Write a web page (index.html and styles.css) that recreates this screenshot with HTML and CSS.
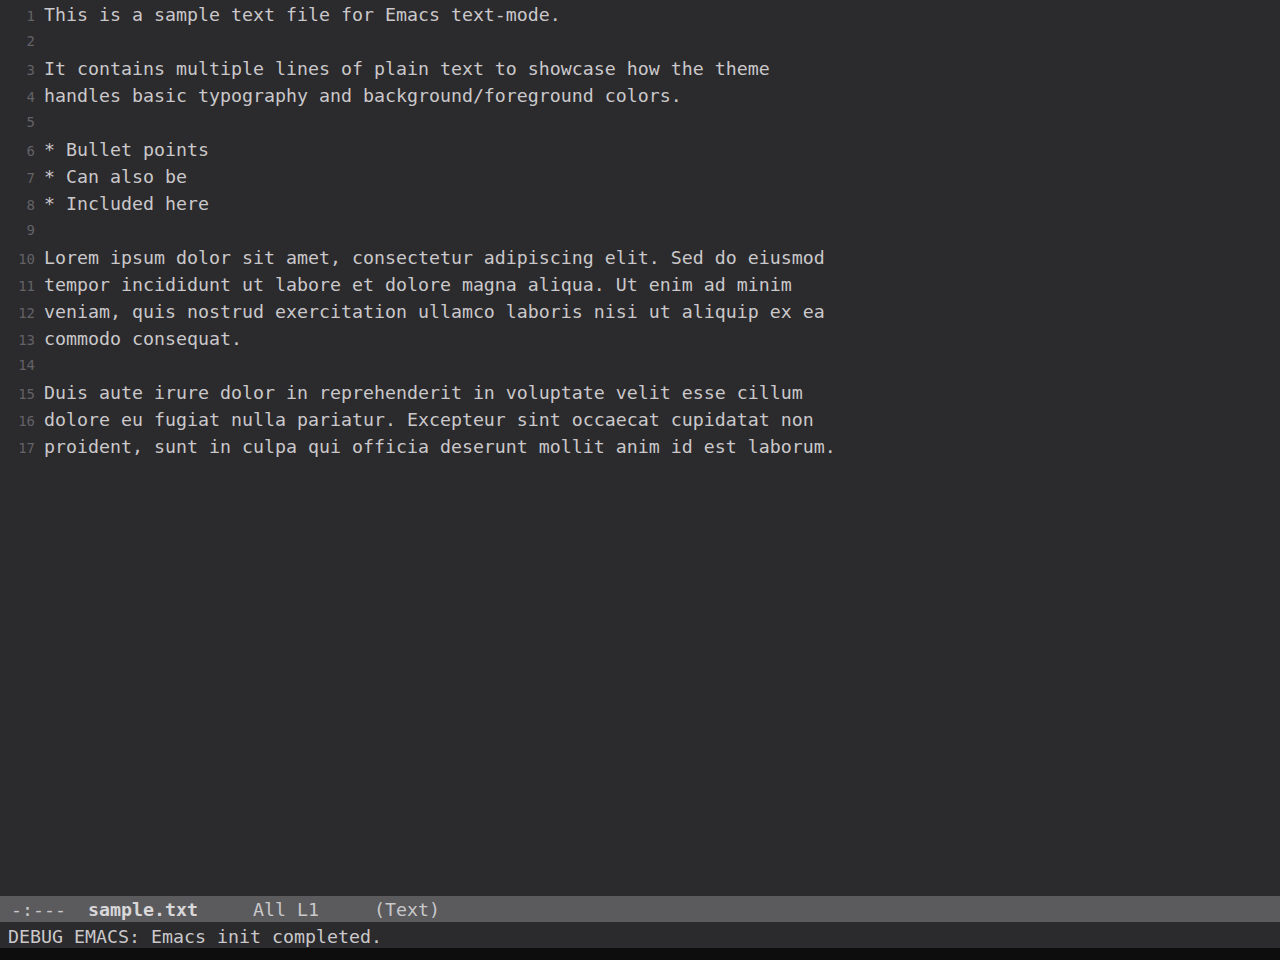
FILE: index.html
```html
<!DOCTYPE html>
<html lang="en">
<head>
  <meta charset="UTF-8">
  <title>sample.txt - Emacs</title>
  <link rel="stylesheet" href="styles.css">
</head>
<body>
  <div class="frame">
    <!-- Buffer window -->
    <div class="buffer">
      <div class="line"><span class="num">1</span><span class="text">This is a sample text file for Emacs text-mode.</span></div>
      <div class="line"><span class="num">2</span><span class="text"></span></div>
      <div class="line"><span class="num">3</span><span class="text">It contains multiple lines of plain text to showcase how the theme</span></div>
      <div class="line"><span class="num">4</span><span class="text">handles basic typography and background/foreground colors.</span></div>
      <div class="line"><span class="num">5</span><span class="text"></span></div>
      <div class="line"><span class="num">6</span><span class="text">* Bullet points</span></div>
      <div class="line"><span class="num">7</span><span class="text">* Can also be</span></div>
      <div class="line"><span class="num">8</span><span class="text">* Included here</span></div>
      <div class="line"><span class="num">9</span><span class="text"></span></div>
      <div class="line"><span class="num">10</span><span class="text">Lorem ipsum dolor sit amet, consectetur adipiscing elit. Sed do eiusmod</span></div>
      <div class="line"><span class="num">11</span><span class="text">tempor incididunt ut labore et dolore magna aliqua. Ut enim ad minim</span></div>
      <div class="line"><span class="num">12</span><span class="text">veniam, quis nostrud exercitation ullamco laboris nisi ut aliquip ex ea</span></div>
      <div class="line"><span class="num">13</span><span class="text">commodo consequat.</span></div>
      <div class="line"><span class="num">14</span><span class="text"></span></div>
      <div class="line"><span class="num">15</span><span class="text">Duis aute irure dolor in reprehenderit in voluptate velit esse cillum</span></div>
      <div class="line"><span class="num">16</span><span class="text">dolore eu fugiat nulla pariatur. Excepteur sint occaecat cupidatat non</span></div>
      <div class="line"><span class="num">17</span><span class="text">proident, sunt in culpa qui officia deserunt mollit anim id est laborum.</span></div>
    </div>

    <!-- Mode line -->
    <div class="mode-line">-:---  <b class="buf-name">sample.txt</b>     All L1     (Text)</div>

    <!-- Echo area -->
    <div class="echo-area">DEBUG EMACS: Emacs init completed.</div>
  </div>
</body>
</html>
```

FILE: styles.css
```css
:root {
  --bg-color: #2b2a2d;
  --text-color: #cac8ca;
  --num-color: #636267;
  --mode-bg: #5b5a5d;
  --mode-text: #c9c8ca;
  --bottom-color: #0d0d0e;
}

html, body {
  margin: 0;
  padding: 0;
  height: 100%;
  background-color: var(--bottom-color);
}

.frame {
  display: flex;
  flex-direction: column;
  height: 948px;
  font-family: 'DejaVu Sans Mono', monospace;
  font-size: 18.27px;
  color: var(--text-color);
}

.buffer {
  flex: 1;
  background-color: var(--bg-color);
}

.line {
  display: flex;
  align-items: baseline;
  box-sizing: border-box;
  height: 27px;
  padding-top: 1px;
  line-height: 27px;
  white-space: pre;
}

.num {
  width: 35px;
  padding-right: 9px;
  text-align: right;
  font-size: 14px;
  color: var(--num-color);
}

.mode-line {
  box-sizing: border-box;
  height: 26px;
  padding-top: 1px;
  padding-left: 11px;
  line-height: 26px;
  white-space: pre;
  background-color: var(--mode-bg);
  color: var(--mode-text);
}

.buf-name {
  font-weight: bold;
  color: #d8d7d9;
}

.echo-area {
  box-sizing: border-box;
  height: 26px;
  padding-top: 1px;
  padding-left: 8px;
  line-height: 28px;
  white-space: pre;
  background-color: var(--bg-color);
  color: var(--text-color);
}
```
